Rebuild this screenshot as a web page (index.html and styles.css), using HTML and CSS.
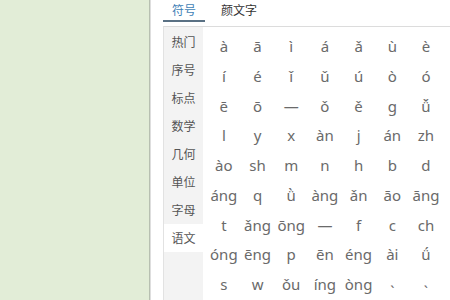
FILE: index.html
```html
<!DOCTYPE html>
<html lang="zh">
<head>
<meta charset="utf-8">
<link rel="stylesheet" href="styles.css">
</head>
<body>
<div class="desk"></div>
<div class="panel">
  <div class="tabs">
    <div class="tab active">符号</div>
    <div class="tab">颜文字</div>
  </div>
  <div class="box">
    <ul class="side">
      <li>热门</li>
      <li>序号</li>
      <li>标点</li>
      <li>数学</li>
      <li>几何</li>
      <li>单位</li>
      <li>字母</li>
      <li class="sel">语文</li>
    </ul>
    <div class="grid">
      <span>à</span><span>ā</span><span>ì</span><span>á</span><span>ǎ</span><span>ù</span><span>è</span>
      <span>í</span><span>é</span><span>ǐ</span><span>ǔ</span><span>ú</span><span>ò</span><span>ó</span>
      <span>ē</span><span>ō</span><span>—</span><span>ǒ</span><span>ě</span><span>g</span><span>ǚ</span>
      <span>l</span><span>y</span><span>x</span><span>àn</span><span>j</span><span>án</span><span>zh</span>
      <span>ào</span><span>sh</span><span>m</span><span>n</span><span>h</span><span>b</span><span>d</span>
      <span>áng</span><span>q</span><span>ǜ</span><span>àng</span><span>ǎn</span><span>āo</span><span>āng</span>
      <span>t</span><span>ǎng</span><span>ōng</span><span>—</span><span>f</span><span>c</span><span>ch</span>
      <span>óng</span><span>ēng</span><span>p</span><span>ēn</span><span>éng</span><span>ài</span><span>ǘ</span>
      <span>s</span><span>w</span><span>ǒu</span><span>íng</span><span>òng</span><span class="tone">ˋ</span><span class="tone">ˋ</span>
    </div>
  </div>
</div>
</body>
</html>
```
FILE: styles.css
```css
html, body {
  margin: 0;
  padding: 0;
  height: 300px;
  overflow: hidden;
}
body {
  display: flex;
  font-family: "Noto Sans", "Noto Sans CJK SC", sans-serif;
  background: #fff;
}
.desk {
  width: 149px;
  flex: none;
  background: #e2edd7;
  border-right: 1px solid #b7c0b1;
}
.panel {
  flex: 1;
  display: flex;
  flex-direction: column;
  border-left: 1px solid #dedede;
  padding-left: 12px;
  background: #fff;
}
.tabs {
  height: 26px;
  display: flex;
  align-items: flex-start;
  flex: none;
}
.tab {
  font-family: "Noto Sans CJK SC", sans-serif;
  font-size: 12px;
  line-height: 19px;
  height: 20px;
  color: #333;
}
.tab.active {
  width: 42px;
  text-align: center;
  color: #3f7fb6;
  border-bottom: 2px solid #5a7184;
}
.tab + .tab {
  margin-left: 16px;
}
.box {
  flex: 1;
  display: flex;
  border-top: 1px solid #dcdcdc;
  border-left: 1px solid #e2e2e2;
}
.side {
  list-style: none;
  margin: 0;
  padding: 1px 0 0;
  width: 39px;
  flex: none;
  background: #f3f3f3;
}
.side li {
  height: 28px;
  line-height: 28px;
  text-align: center;
  font-family: "Noto Sans CJK SC", sans-serif;
  font-size: 12px;
  color: #555;
}
.side li.sel {
  background: #fff;
}
.grid {
  margin-left: 4px;
  padding-top: 5px;
  display: grid;
  grid-template-columns: repeat(7, 33.7px);
  grid-auto-rows: 29.75px;
  align-content: start;
}
.grid span {
  text-align: center;
  line-height: 29.75px;
  font-size: 15px;
  color: #6a6a6a;
  white-space: nowrap;
}
.grid span.tone {
  box-sizing: border-box;
  padding-top: 7px;
}
```
